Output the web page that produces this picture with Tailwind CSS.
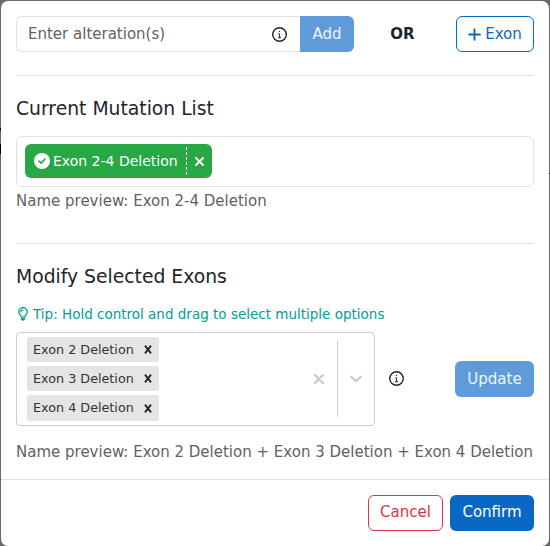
<!DOCTYPE html>
<html lang="en">
<head>
<meta charset="utf-8">
<title>Add mutation</title>
<script src="https://cdn.jsdelivr.net/npm/@tailwindcss/browser@4"></script>
</head>
<body class="relative h-[546px] w-[550px] overflow-hidden bg-[#69686a] pt-px px-px font-['DejaVu_Sans',sans-serif] text-[15px] leading-[22px] text-[#212529]">
<!-- page content showing at the edges of the dialog -->
<span class="absolute left-0 top-[128px] h-[3px] w-px bg-[#0b0b3c]"></span>
<span class="absolute left-0 top-[144px] h-[10px] w-px bg-black"></span>
<span class="absolute right-0 top-[173px] h-px w-px bg-black"></span>
<div class="flex h-[545px] flex-col rounded-[7px] bg-white">
  <main class="flex h-[478px] flex-col px-[15px] pt-[15px]">
    <div class="flex h-9 items-center justify-between">
      <div class="flex h-9 w-[338px]">
        <div class="flex flex-1 items-center justify-between rounded-l-[6px] border border-r-0 border-[#dee2e6] pl-[11px] pr-[13px]">
          <span class="text-[#5f6165]">Enter alteration(s)</span>
          <svg class="mt-px size-[15px]" viewBox="0 0 15 15" fill="none" stroke="#212529"><circle cx="7.5" cy="7.5" r="6.8" stroke-width="1.4"/><path d="M6.3 6.8h1.3v3.8M6 10.7h3M6.9 4.5h1.1" stroke-width="1"/></svg>
        </div>
        <button class="h-9 w-[54px] rounded-r-[6px] bg-[#5e9bd8] pb-px text-[#eff5fb]">Add</button>
      </div>
      <b class="relative -left-[2px] ml-[-1px]">OR</b>
      <button class="flex h-9 w-[78px] items-center justify-center gap-1 rounded-[6px] border border-[#0968c3] text-[#0968c3]">
        <svg class="size-[13px]" viewBox="0 0 13 13" fill="none" stroke="currentColor" stroke-width="1.9" stroke-linecap="round"><path d="M6.5 1.2v10.6M1.2 6.5h10.6"/></svg>Exon
      </button>
    </div>
    <hr class="mt-[23px] border-[#dee0e2]">
    <h2 class="mt-[21px] text-[18.75px] leading-[23px]">Current Mutation List</h2>
    <div class="mt-4 h-[51px] rounded-[6px] border border-[#dee2e6] py-[7px] px-2">
      <div class="flex h-[34px] w-[187px] items-center rounded-[6px] bg-[#28a745] pl-[9px] text-[14px] text-white">
        <svg class="size-4" viewBox="0 0 16 16"><circle cx="8" cy="8" r="8" fill="#fff"/><path d="M4.9 8 7 10.1l4.1-4.1" fill="none" stroke="#28a745" stroke-width="1.6" stroke-linecap="round" stroke-linejoin="round"/></svg>
        <span class="ml-[3px] w-[133px] whitespace-nowrap">Exon 2-4 Deletion</span>
        <span class="h-7 border-l border-dashed border-white"></span>
        <svg class="ml-2 size-[9px]" viewBox="0 0 9 9" stroke="#fff" stroke-width="1.8" stroke-linecap="round"><path d="m1 1 7 7M8 1 1 8"/></svg>
      </div>
    </div>
    <p class="mt-[3px] text-[#5f6165]">Name preview: Exon 2-4 Deletion</p>
    <hr class="mt-[31px] border-[#dee0e2]">
    <h2 class="mt-[21px] text-[18.75px] leading-[23px]">Modify Selected Exons</h2>
    <p class="mt-4 flex h-5 items-center text-[13.5px] leading-5 text-[#009e96]">
      <svg class="ml-[2px] mr-[5px] h-[14px] w-[10px]" viewBox="0 0 10 14" fill="none" stroke="currentColor" stroke-width="1.3" stroke-linecap="round"><path d="M3.1 9.8C2.9 8 .7 7 .7 4.9a4.3 4.3 0 0 1 8.6 0C9.3 7 7.1 8 6.9 9.8ZM2.8 4.9C2.8 3.6 3.7 2.9 5 2.9"/><path d="M2.7 11h4.6c0 3.6-4.6 3.6-4.6 0Z" fill="currentColor" stroke="none"/></svg>Tip: Hold control and drag to select multiple options
    </p>
    <div class="mt-2 flex h-[94px] items-center">
      <div class="flex h-[94px] w-[359px] items-center rounded-[4px] border border-[#ccc]">
        <div class="ml-[10px] flex h-[84px] w-[132px] flex-col justify-between text-[12.75px] text-[#333]">
          <div class="flex h-[25px] items-center justify-between rounded-[2px] bg-[#e5e5e5] pl-[6px] pr-[7px]"><span>Exon 2 Deletion</span><svg class="h-[9px] w-2" viewBox="0 0 8 9" stroke="#212529" stroke-width="1.9"><path d="m1 .7 6 7.6M7 .7 1 8.3"/></svg></div>
          <div class="flex h-[25px] items-center justify-between rounded-[2px] bg-[#e5e5e5] pl-[6px] pr-[7px]"><span>Exon 3 Deletion</span><svg class="h-[9px] w-2" viewBox="0 0 8 9" stroke="#212529" stroke-width="1.9"><path d="m1 .7 6 7.6M7 .7 1 8.3"/></svg></div>
          <div class="flex h-[26px] items-center justify-between rounded-[2px] bg-[#e5e5e5] pl-[6px] pr-[7px]"><span>Exon 4 Deletion</span><svg class="h-[9px] w-2" viewBox="0 0 8 9" stroke="#212529" stroke-width="1.9"><path d="m1 .7 6 7.6M7 .7 1 8.3"/></svg></div>
        </div>
        <svg class="ml-auto mr-[13px] size-[10px]" viewBox="0 0 10 10" stroke="#ccc" stroke-width="2.4" stroke-linecap="round"><path d="m1.2 1.2 7.6 7.6M8.8 1.2 1.2 8.8"/></svg>
        <span class="h-[76px] w-px bg-[#ccc]"></span>
        <svg class="ml-3 mr-3 h-2 w-3" viewBox="0 0 12 8" fill="none" stroke="#ccc" stroke-width="2.2" stroke-linecap="round" stroke-linejoin="round"><path d="m1.2 1.7 4.8 4.6 4.8-4.6"/></svg>
      </div>
      <svg class="relative -top-px ml-[14px] size-[15px]" viewBox="0 0 15 15" fill="none" stroke="#212529"><circle cx="7.5" cy="7.5" r="6.8" stroke-width="1.4"/><path d="M6.3 6.8h1.3v3.8M6 10.7h3M6.9 4.5h1.1" stroke-width="1"/></svg>
      <button class="ml-auto h-9 w-[79px] rounded-[6px] bg-[#5e9bd8] text-[#eff5fb]">Update</button>
    </div>
    <p class="mt-[15px] whitespace-nowrap text-[#5f6165]">Name preview: Exon 2 Deletion + Exon 3 Deletion + Exon 4 Deletion</p>
  </main>
  <footer class="flex flex-1 justify-end gap-[7px] border-t border-[#dee0e2] px-[15px] pt-[15px]">
    <button class="h-9 w-[75px] rounded-[6px] border border-[#dc3545] pb-[2px] text-[#dc3545]">Cancel</button>
    <button class="h-9 w-[84px] rounded-[6px] bg-[#0968c3] pb-[2px] text-white">Confirm</button>
  </footer>
</div>
</body>
</html>
